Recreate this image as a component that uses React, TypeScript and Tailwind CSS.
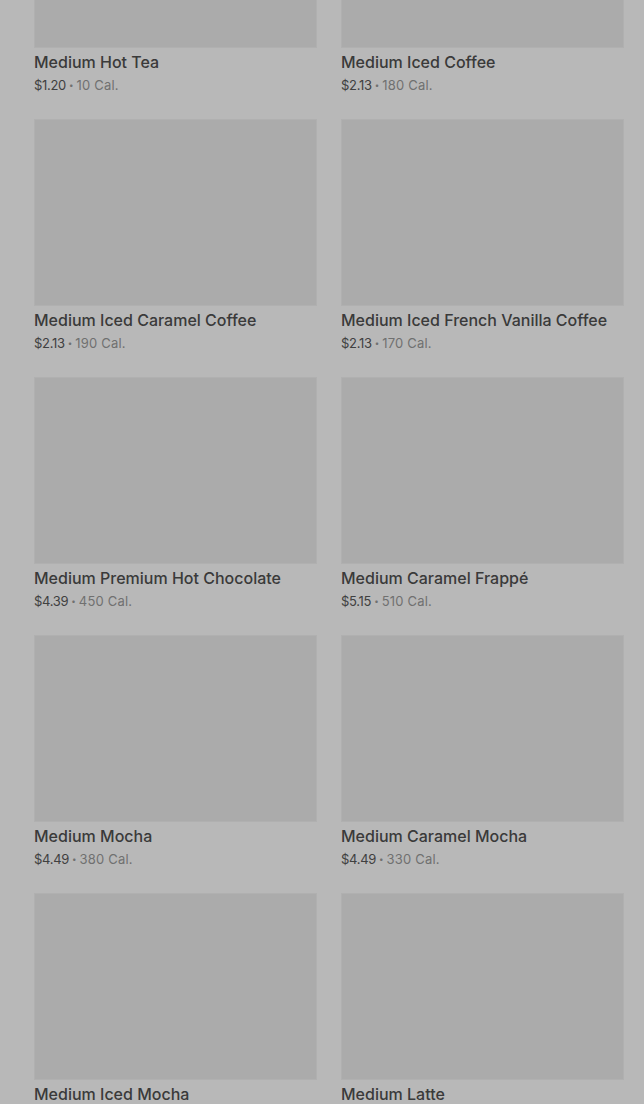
import React from "react";

const items = [
  ["Medium Hot Tea", "$1.20", "10 Cal."],
  ["Medium Iced Coffee", "$2.13", "180 Cal."],
  ["Medium Iced Caramel Coffee", "$2.13", "190 Cal."],
  ["Medium Iced French Vanilla Coffee", "$2.13", "170 Cal."],
  ["Medium Premium Hot Chocolate", "$4.39", "450 Cal."],
  ["Medium Caramel Frappé", "$5.15", "510 Cal."],
  ["Medium Mocha", "$4.49", "380 Cal."],
  ["Medium Caramel Mocha", "$4.49", "330 Cal."],
  ["Medium Iced Mocha", "$4.49", "350 Cal."],
  ["Medium Latte", "$4.49", "190 Cal."],
];

export default function App() {
  return (
    <div
      className="w-[644px] h-[1104px] overflow-hidden bg-[#b8b8b8]"
      style={{ fontFamily: "Inter, 'Noto Sans', sans-serif" }}
    >
      <div className="mt-[-139px] pl-[34px] pr-[20px] grid grid-cols-2 gap-x-[24px] gap-y-[24px]">
        {items.map(([name, price, cal]) => (
          <div key={name} className="flex flex-col">
            <div className="h-[187px] bg-[#ababab] border border-[#b0b0b0]" />
            <div className="mt-[2px] h-[24px] leading-[24px] text-[16px] font-medium text-[#3a3a3a] whitespace-nowrap">
              {name}
            </div>
            <div className="mt-[1px] h-[20px] leading-[20px] text-[13px] whitespace-nowrap flex items-center">
              <span className="text-[#404040] tracking-[-0.3px]">{price}</span>
              <span className="text-[#707070] text-[8px] mx-[3px]">•</span>
              <span className="text-[#707070] tracking-[0.2px]">{cal}</span>
            </div>
          </div>
        ))}
      </div>
    </div>
  );
}
